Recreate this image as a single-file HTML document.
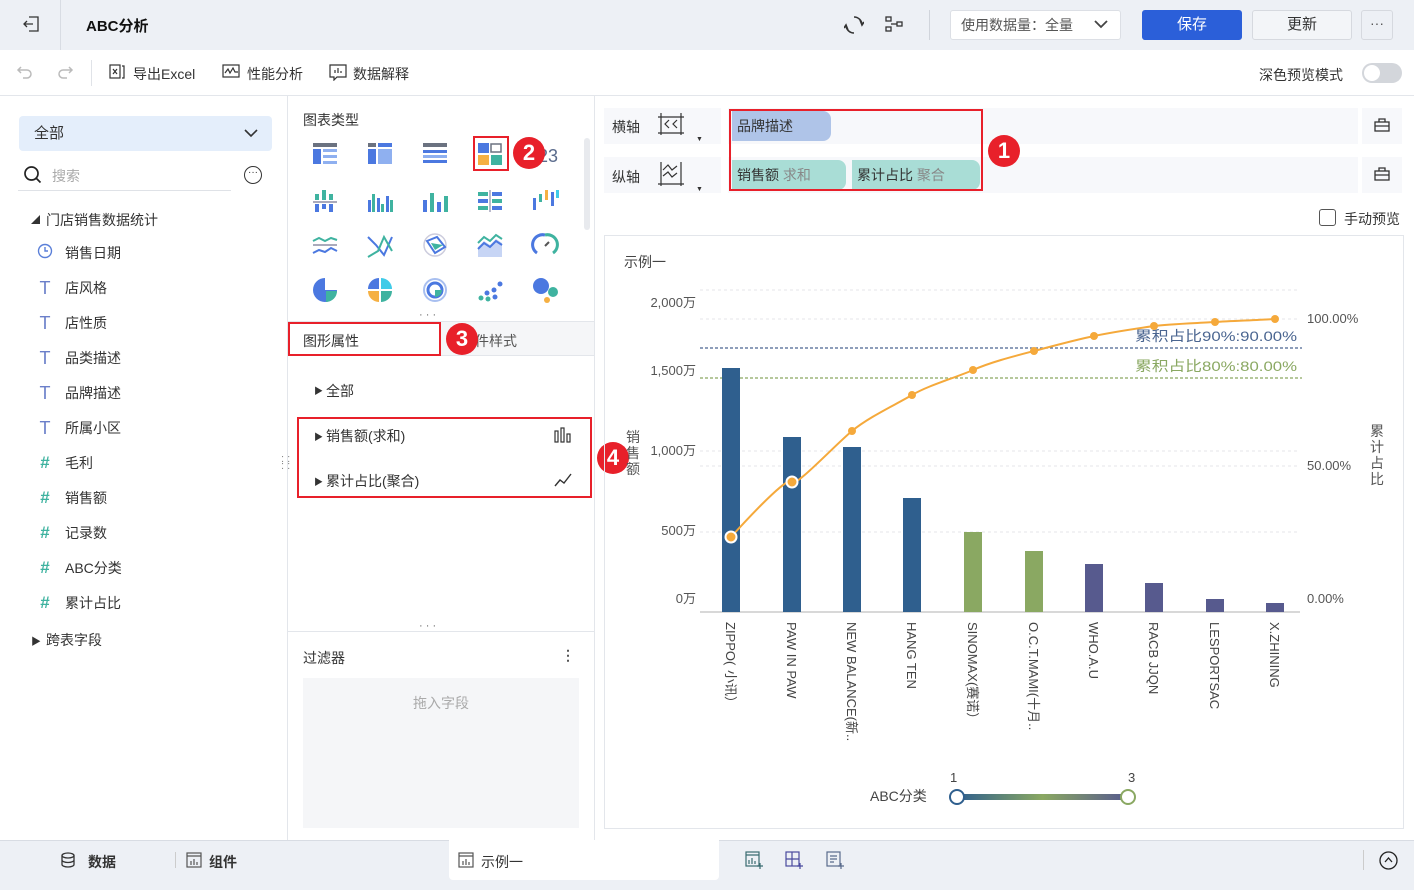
<!DOCTYPE html>
<html><head><meta charset="utf-8"><style>
*{box-sizing:border-box;margin:0;padding:0}
body{width:1414px;height:890px;position:relative;overflow:hidden;background:#fff;font-family:"Liberation Sans","Noto Sans CJK SC",sans-serif;font-size:14px;color:#333}
.a{position:absolute;white-space:nowrap}
.red{position:absolute;border:2px solid #e8202a}
.badge{position:absolute;width:32px;height:32px;border-radius:50%;background:#e8202a;color:#fff;font-size:22px;font-weight:bold;text-align:center;line-height:32px}
.fld{position:absolute;left:36px;font-size:14px;color:#333}
.fld i{position:absolute;left:0;font-style:normal;width:18px;text-align:center}
.fld span{position:absolute;left:29px;white-space:nowrap}
</style></head><body>
<div class="a" style="left:0;top:0;width:1414px;height:50px;background:#edf0f5"></div>
<div class="a" style="left:60px;top:0;width:1px;height:50px;background:#d8dce3"></div>
<svg class="a" style="left:22px;top:15px" width="18" height="18" viewBox="0 0 18 18" fill="none" stroke="#333" stroke-width="1.3"><path d="M7 2h9v14H7M2 9h9M5 6L2 9l3 3"/></svg>
<div class="a" style="left:86px;top:15px;font-weight:bold;font-size:15px;color:#111">ABC分析</div>
<svg class="a" style="left:844px;top:15px" width="20" height="20" viewBox="0 0 20 20" fill="none" stroke="#333" stroke-width="1.6"><path d="M10 2a8 8 0 0 1 8 8M10 18a8 8 0 0 1-8-8M16 5l2 5 2-3M4 15l-2-5-2 3"/></svg>
<svg class="a" style="left:884px;top:16px" width="20" height="18" viewBox="0 0 20 18" fill="none" stroke="#333" stroke-width="1.3"><rect x="2" y="1" width="5" height="4"/><rect x="2" y="11" width="5" height="4"/><rect x="13" y="6" width="5" height="4"/><path d="M7 8h6"/></svg>
<div class="a" style="left:929px;top:10px;width:1px;height:30px;background:#d0d4db"></div>
<div class="a" style="left:950px;top:10px;width:171px;height:30px;background:#fff;border:1px solid #dcdfe5;border-radius:3px;padding-left:10px;line-height:28px;color:#555">使用数据量：全量</div>
<svg class="a" style="left:1093px;top:18px" width="16" height="12" viewBox="0 0 16 12" fill="none" stroke="#444" stroke-width="1.8"><path d="M2 3l6 6 6-6"/></svg>
<div class="a" style="left:1142px;top:10px;width:100px;height:30px;background:#2b5fd9;border-radius:3px;color:#fff;text-align:center;line-height:30px;font-size:15px">保存</div>
<div class="a" style="left:1252px;top:10px;width:100px;height:30px;background:#f3f5f8;border:1px solid #d6d9df;border-radius:3px;text-align:center;line-height:28px;font-size:15px;color:#333">更新</div>
<div class="a" style="left:1361px;top:10px;width:32px;height:30px;border:1px solid #d6d9df;border-radius:3px;text-align:center;line-height:24px;color:#555">···</div>
<div class="a" style="left:0;top:95px;width:1414px;height:1px;background:#e3e6eb"></div>
<svg class="a" style="left:16px;top:64px" width="18" height="16" viewBox="0 0 18 16" fill="none" stroke="#bbb" stroke-width="1.5"><path d="M5 3L2 6l3 3M2 6h9a4 4 0 0 1 0 8H7"/></svg>
<svg class="a" style="left:56px;top:64px" width="18" height="16" viewBox="0 0 18 16" fill="none" stroke="#bbb" stroke-width="1.5"><path d="M13 3l3 3-3 3M16 6H7a4 4 0 0 0 0 8h4"/></svg>
<div class="a" style="left:91px;top:60px;width:1px;height:26px;background:#e0e3e8"></div>
<svg class="a" style="left:109px;top:64px" width="16" height="16" viewBox="0 0 16 16" fill="none" stroke="#333" stroke-width="1.2"><rect x="1" y="1" width="10" height="13"/><path d="M4 5l4 5M8 5l-4 5M13 2h2v12h-2"/></svg>
<div class="a" style="left:133px;top:64px;color:#333">导出Excel</div>
<svg class="a" style="left:222px;top:64px" width="18" height="16" viewBox="0 0 18 16" fill="none" stroke="#333" stroke-width="1.2"><rect x="1" y="1" width="16" height="12"/><path d="M3 9l3-4 2 4 3-5 2 4h3"/></svg>
<div class="a" style="left:247px;top:64px">性能分析</div>
<svg class="a" style="left:329px;top:64px" width="18" height="17" viewBox="0 0 18 17" fill="none" stroke="#333" stroke-width="1.2"><path d="M1 1h16v12H8l-3 3v-3H1z"/><path d="M6 9V6M9 9V4M12 9V7"/></svg>
<div class="a" style="left:353px;top:64px">数据解释</div>
<div class="a" style="left:1259px;top:65px;color:#333">深色预览模式</div>
<div class="a" style="left:1362px;top:63px;width:40px;height:20px;border-radius:10px;background:#d3d6db"></div>
<div class="a" style="left:1364px;top:65px;width:16px;height:16px;border-radius:50%;background:#fff"></div>
<div class="a" style="left:287px;top:96px;width:1px;height:744px;background:#e3e6eb"></div>
<div class="a" style="left:19px;top:116px;width:253px;height:35px;background:#e4eefb;border-radius:4px;padding-left:15px;line-height:35px;font-size:15px">全部</div>
<svg class="a" style="left:243px;top:127px" width="16" height="12" viewBox="0 0 16 12" fill="none" stroke="#333" stroke-width="1.6"><path d="M2 3l6 6 6-6"/></svg>
<svg class="a" style="left:23px;top:165px" width="20" height="20" viewBox="0 0 20 20" fill="none" stroke="#222" stroke-width="1.7"><circle cx="8.5" cy="8.5" r="6.5"/><path d="M13.5 13.5l4 4"/></svg>
<div class="a" style="left:52px;top:166px;color:#aaa">搜索</div>
<div class="a" style="left:18px;top:190px;width:213px;height:1px;background:#dfe2e7"></div>
<div class="a" style="left:244px;top:166px;width:18px;height:18px;border:1.3px solid #333;border-radius:50%;font-size:10px;text-align:center;line-height:12px">···</div>
<div class="a" style="left:31px;top:213px;font-size:9px">◢</div>
<div class="a" style="left:46px;top:210px">门店销售数据统计</div>
<div class="fld" style="top:243px"><i style="color:#5a7fd8"><svg width="16" height="16" viewBox="0 0 16 16" fill="none" stroke="#5a7fd8" stroke-width="1.4"><circle cx="8" cy="8" r="6.5"/><path d="M8 4v4h3"/></svg></i><span>销售日期</span></div>
<div class="fld" style="top:278px"><i style="color:#6b7fc9;font-size:18px">T</i><span>店风格</span></div>
<div class="fld" style="top:313px"><i style="color:#6b7fc9;font-size:18px">T</i><span>店性质</span></div>
<div class="fld" style="top:348px"><i style="color:#6b7fc9;font-size:18px">T</i><span>品类描述</span></div>
<div class="fld" style="top:383px"><i style="color:#6b7fc9;font-size:18px">T</i><span>品牌描述</span></div>
<div class="fld" style="top:418px"><i style="color:#6b7fc9;font-size:18px">T</i><span>所属小区</span></div>
<div class="fld" style="top:453px"><i style="color:#3fb3a0;font-size:17px;font-weight:bold">#</i><span>毛利</span></div>
<div class="fld" style="top:488px"><i style="color:#3fb3a0;font-size:17px;font-weight:bold">#</i><span>销售额</span></div>
<div class="fld" style="top:523px"><i style="color:#3fb3a0;font-size:17px;font-weight:bold">#</i><span>记录数</span></div>
<div class="fld" style="top:558px"><i style="color:#3fb3a0;font-size:17px;font-weight:bold">#</i><span>ABC分类</span></div>
<div class="fld" style="top:593px"><i style="color:#3fb3a0;font-size:17px;font-weight:bold">#</i><span>累计占比</span></div>
<div class="a" style="left:31px;top:633px;font-size:10px">▶</div>
<div class="a" style="left:46px;top:630px">跨表字段</div>
<div class="a" style="left:281px;top:456px;color:#888;font-size:11px;line-height:7px">: :<br>: :</div>
<div class="a" style="left:594px;top:96px;width:1px;height:744px;background:#e3e6eb"></div>
<div class="a" style="left:303px;top:110px">图表类型</div>
<div class="a" style="left:584px;top:138px;width:6px;height:92px;border-radius:3px;background:#e8eaee"></div>
<svg class="a" style="left:305px;top:135px" width="265" height="170">
<g transform="translate(8,8)"><rect width="24" height="4" fill="#6b7280"/><rect y="6" width="8" height="15" fill="#4b78e0"/><rect x="10" y="6" width="14" height="3" fill="#8fb0f0"/><rect x="10" y="12" width="14" height="3" fill="#8fb0f0"/><rect x="10" y="18" width="14" height="3" fill="#8fb0f0"/></g>
<g transform="translate(63,8)"><rect width="8" height="4" fill="#6b7280"/><rect x="10" width="14" height="4" fill="#4b78e0"/><rect y="6" width="8" height="15" fill="#4b78e0"/><rect x="10" y="6" width="14" height="15" fill="#8fb0f0"/></g>
<g transform="translate(118,8)"><rect width="24" height="4" fill="#6b7280"/><rect y="7" width="24" height="3" fill="#4b78e0"/><rect y="12" width="24" height="3" fill="#8fb0f0"/><rect y="17" width="24" height="3" fill="#4b78e0"/></g>
<g transform="translate(173,8)"><rect width="11" height="10" fill="#4b78e0"/><rect x="13" y="1" width="10" height="8" fill="none" stroke="#6b7280" stroke-width="1.5"/><rect y="12" width="11" height="10" fill="#f5b043"/><rect x="13" y="12" width="11" height="10" fill="#3fb3a0"/></g>
<text x="233" y="27" font-size="18" fill="#5a6b8c" font-family="Liberation Sans">23</text>
<g transform="translate(8,55)"><rect x="2" y="4" width="4" height="6" fill="#3fb3a0"/><rect x="9" y="0" width="4" height="10" fill="#3fb3a0"/><rect x="16" y="4" width="4" height="6" fill="#3fb3a0"/><rect y="11" width="24" height="2" fill="#aab"/><rect x="2" y="14" width="4" height="8" fill="#4b78e0"/><rect x="9" y="14" width="4" height="5" fill="#4b78e0"/><rect x="16" y="14" width="4" height="8" fill="#4b78e0"/></g>
<g transform="translate(63,55)"><rect x="0" y="10" width="3" height="12" fill="#4b78e0"/><rect x="4" y="4" width="3" height="18" fill="#3fb3a0"/><rect x="9" y="8" width="3" height="14" fill="#4b78e0"/><rect x="13" y="14" width="3" height="8" fill="#3fb3a0"/><rect x="18" y="6" width="3" height="16" fill="#4b78e0"/><rect x="22" y="10" width="3" height="12" fill="#3fb3a0"/></g>
<g transform="translate(118,55)"><rect x="0" y="10" width="4" height="12" fill="#4b78e0"/><rect x="7" y="3" width="4" height="19" fill="#3fb3a0"/><rect x="14" y="12" width="4" height="10" fill="#4b78e0"/><rect x="21" y="6" width="4" height="16" fill="#3fb3a0"/></g>
<g transform="translate(173,55)"><rect x="0" y="2" width="10" height="4" fill="#3fb3a0"/><rect x="14" y="2" width="10" height="4" fill="#4b78e0"/><rect x="0" y="9" width="10" height="4" fill="#4b78e0"/><rect x="14" y="9" width="10" height="4" fill="#3fb3a0"/><rect x="0" y="16" width="10" height="4" fill="#3fb3a0"/><rect x="14" y="16" width="10" height="4" fill="#4b78e0"/><rect x="11" y="0" width="2" height="22" fill="#bbc"/></g>
<g transform="translate(228,55)"><rect x="0" y="8" width="3" height="12" fill="#4b78e0"/><rect x="6" y="4" width="3" height="8" fill="#3fb3a0"/><rect x="12" y="0" width="3" height="10" fill="#f5b043"/><rect x="18" y="2" width="3" height="14" fill="#4b78e0"/><rect x="23" y="0" width="3" height="8" fill="#3fcbe8"/></g>
<g transform="translate(8,100)" fill="none" stroke-width="2"><path d="M0 6l6-3 6 3 6-3 6 2" stroke="#3fb3a0"/><path d="M0 10h24" stroke="#aab"/><path d="M0 18l6-3 6 2 6-4 6 3" stroke="#4b78e0"/></g>
<g transform="translate(63,100)" fill="none" stroke-width="2"><path d="M0 2l8 8 8 10 8-18" stroke="#4b78e0"/><path d="M0 22l10-6 6-14 8 14" stroke="#3fb3a0"/></g>
<g transform="translate(118,98)" fill="none"><circle cx="12" cy="12" r="11" stroke="#ccd" stroke-width="1.5"/><path d="M4 8l10-4 8 10-10 6z" stroke="#4b78e0" stroke-width="2"/><path d="M8 10l12 2-8 5z" fill="#3fb3a0"/></g>
<g transform="translate(173,100)" fill="none"><path d="M0 12l6-6 6 4 6-6 6 4v14H0z" fill="#c7d5f5"/><path d="M0 8l6-6 6 4 6-6 6 4" stroke="#3fb3a0" stroke-width="2"/><path d="M0 14l6-6 6 4 6-6 6 4" stroke="#4b78e0" stroke-width="2"/></g>
<g transform="translate(228,98)" fill="none" stroke-width="3"><path d="M4 20A10 10 0 0 1 12 2" stroke="#4b78e0"/><path d="M12 2a10 10 0 0 1 8 18" stroke="#3fb3a0"/><path d="M12 13l4-4" stroke="#555" stroke-width="2"/></g>
<g transform="translate(8,143)"><path d="M12 12V0a12 12 0 1 0 12 12z" fill="#4b78e0"/><path d="M13 13h11a11 11 0 0 1-11 11z" fill="#3fb3a0"/></g>
<g transform="translate(63,143)"><path d="M11 11H0A11 11 0 0 1 11 0z" fill="#4b78e0"/><path d="M13 11V0a11 11 0 0 1 11 11z" fill="#3fcbe8"/><path d="M11 13v11A11 11 0 0 1 0 13z" fill="#f5b043"/><path d="M13 13h11a11 11 0 0 1-11 11z" fill="#3fb3a0"/></g>
<g transform="translate(118,143)" fill="none"><circle cx="12" cy="12" r="11" stroke="#a8bff0" stroke-width="2"/><circle cx="12" cy="12" r="7" stroke="#4b78e0" stroke-width="3"/><path d="M12 12h7a7 7 0 0 1-7 7z" fill="#3fb3a0"/></g>
<g transform="translate(173,143)"><circle cx="3" cy="20" r="2.5" fill="#3fb3a0"/><circle cx="9" cy="15" r="2.5" fill="#4b78e0"/><circle cx="10" cy="21" r="2.5" fill="#3fb3a0"/><circle cx="16" cy="12" r="2.5" fill="#4b78e0"/><circle cx="17" cy="19" r="2.5" fill="#4b78e0"/><circle cx="22" cy="6" r="2.5" fill="#4b78e0"/></g>
<g transform="translate(228,143)"><circle cx="8" cy="8" r="8" fill="#4b78e0"/><circle cx="20" cy="14" r="5" fill="#3fb3a0"/><circle cx="14" cy="22" r="3" fill="#f5b043"/></g>
</svg>
<div class="red" style="left:473px;top:136px;width:36px;height:35px"></div>
<div class="badge" style="left:513px;top:137px">2</div>
<div class="a" style="left:419px;top:309px;color:#666;font-size:11px">· · ·</div>
<div class="a" style="left:288px;top:321px;width:306px;height:1px;background:#e3e6eb"></div>
<div class="a" style="left:288px;top:355px;width:306px;height:1px;background:#e3e6eb"></div>
<div class="a" style="left:440px;top:322px;width:154px;height:33px;background:#f5f6f8"></div>
<div class="a" style="left:303px;top:331px">图形属性</div>
<div class="a" style="left:475px;top:331px;color:#555">件样式</div>
<div class="red" style="left:288px;top:322px;width:153px;height:34px"></div>
<div class="badge" style="left:446px;top:323px">3</div>
<div class="a" style="left:314px;top:384px;font-size:9px">▶</div>
<div class="a" style="left:326px;top:381px">全部</div>
<div class="a" style="left:314px;top:430px;font-size:9px">▶</div>
<div class="a" style="left:326px;top:426px">销售额(求和)</div>
<svg class="a" style="left:554px;top:427px" width="18" height="16" viewBox="0 0 18 16" fill="none" stroke="#333" stroke-width="1.2"><rect x="1" y="4" width="3" height="11"/><rect x="7" y="1" width="3" height="14"/><rect x="13" y="7" width="3" height="8"/></svg>
<div class="a" style="left:314px;top:475px;font-size:9px">▶</div>
<div class="a" style="left:326px;top:471px">累计占比(聚合)</div>
<svg class="a" style="left:554px;top:472px" width="18" height="16" viewBox="0 0 18 16" fill="none" stroke="#333" stroke-width="1.4"><path d="M1 14l5-6 4 3 7-9"/></svg>
<div class="red" style="left:297px;top:417px;width:295px;height:81px"></div>
<div class="badge" style="left:597px;top:442px">4</div>
<div class="a" style="left:419px;top:620px;color:#666;font-size:11px">· · ·</div>
<div class="a" style="left:288px;top:631px;width:306px;height:1px;background:#e3e6eb"></div>
<div class="a" style="left:303px;top:648px">过滤器</div>
<div class="a" style="left:561px;top:647px;color:#555;font-weight:bold">⋮</div>
<div class="a" style="left:303px;top:678px;width:276px;height:150px;background:#f5f6f8;text-align:center;padding-top:15px;color:#aaa">拖入字段</div>
<div class="a" style="left:604px;top:108px;width:117px;height:36px;background:#f7f8fb"></div>
<div class="a" style="left:604px;top:157px;width:117px;height:36px;background:#f7f8fb"></div>
<div class="a" style="left:612px;top:117px">横轴</div>
<div class="a" style="left:612px;top:167px">纵轴</div>
<svg class="a" style="left:657px;top:111px" width="28" height="28" viewBox="0 0 28 28" fill="none" stroke="#333" stroke-width="1.2"><path d="M4 2v22M24 2v22M1 22h26M1 6h26M12 9l-4 4 4 4M20 9l-4 4 4 4"/></svg>
<svg class="a" style="left:657px;top:160px" width="28" height="28" viewBox="0 0 28 28" fill="none" stroke="#333" stroke-width="1.2"><path d="M4 2v24M24 2v24M1 24h26M6 10l5-5 4 5 5-4M6 16l5-4 4 5 5-4"/></svg>
<div class="a" style="left:696px;top:136px;font-size:7px">▼</div>
<div class="a" style="left:696px;top:186px;font-size:7px">▼</div>
<div class="a" style="left:728px;top:108px;width:630px;height:36px;background:#f7f8fb"></div>
<div class="a" style="left:728px;top:157px;width:630px;height:36px;background:#f7f8fb"></div>
<div class="a" style="left:1362px;top:108px;width:40px;height:36px;background:#f7f8fb"></div>
<div class="a" style="left:1362px;top:157px;width:40px;height:36px;background:#f7f8fb"></div>
<svg class="a" style="left:1374px;top:117px" width="16" height="16" viewBox="0 0 16 16" fill="none" stroke="#333" stroke-width="1.3"><rect x="1" y="5" width="14" height="9"/><path d="M5 5V2h6v3M1 9h14"/></svg>
<svg class="a" style="left:1374px;top:166px" width="16" height="16" viewBox="0 0 16 16" fill="none" stroke="#333" stroke-width="1.3"><rect x="1" y="5" width="14" height="9"/><path d="M5 5V2h6v3M1 9h14"/></svg>
<div class="a" style="left:732px;top:111px;width:99px;height:30px;background:#afc4e8;border-radius:0 8px 8px 0;padding-left:5px;line-height:30px">品牌描述</div>
<div class="a" style="left:732px;top:160px;width:114px;height:30px;background:#a9ddd6;border-radius:0 8px 8px 0;padding-left:5px;line-height:30px">销售额 <span style="color:#888">求和</span></div>
<div class="a" style="left:852px;top:160px;width:128px;height:30px;background:#a9ddd6;border-radius:0 8px 8px 0;padding-left:5px;line-height:30px">累计占比 <span style="color:#888">聚合</span></div>
<div class="red" style="left:729px;top:109px;width:254px;height:82px"></div>
<div class="badge" style="left:988px;top:135px">1</div>
<div class="a" style="left:1319px;top:209px;width:17px;height:17px;border:1.3px solid #555;border-radius:3px"></div>
<div class="a" style="left:1344px;top:209px">手动预览</div>
<div class="a" style="left:604px;top:235px;width:800px;height:594px;border:1px solid #e3e6eb"></div>
<div class="a" style="left:624px;top:252px;color:#444">示例一</div>
<svg class="a" style="left:600px;top:230px" width="810" height="600" font-family="Liberation Sans,Noto Sans CJK SC,sans-serif">
<g transform="translate(-600,-230)">
<g stroke="#e4e6ea" stroke-dasharray="3 3"><path d="M700 290H1300M700 319H1300M700 451H1300M700 466H1300M700 532H1300"/></g>
<path d="M700 612H1300" stroke="#ccc" stroke-width="1.5"/>
<path d="M700 348H1302" stroke="#4a6590" stroke-dasharray="3 2" stroke-width="1.3"/>
<path d="M700 378H1302" stroke="#8aa862" stroke-dasharray="3 2" stroke-width="1.3"/>
<g fill="#555" font-size="13" text-anchor="end"><text x="696" y="307">2,000万</text><text x="696" y="375">1,500万</text><text x="696" y="455">1,000万</text><text x="696" y="535">500万</text><text x="696" y="603">0万</text></g>
<g fill="#555" font-size="13"><text x="1307" y="323">100.00%</text><text x="1307" y="470">50.00%</text><text x="1307" y="603">0.00%</text></g>
<g fill="#555" font-size="14"><text x="626" y="442">销</text><text x="626" y="458">售</text><text x="626" y="474">额</text><text x="1370" y="436">累</text><text x="1370" y="452">计</text><text x="1370" y="468">占</text><text x="1370" y="484">比</text></g>
<text x="1135" y="341" font-size="14" fill="#4a6590" textLength="162" lengthAdjust="spacingAndGlyphs">累积占比90%:90.00%</text>
<text x="1135" y="371" font-size="14" fill="#8aa862" textLength="162" lengthAdjust="spacingAndGlyphs">累积占比80%:80.00%</text>
<g fill="#2f5f8e"><rect x="722" y="368" width="18" height="244"/><rect x="783" y="437" width="18" height="175"/><rect x="843" y="447" width="18" height="165"/><rect x="903" y="498" width="18" height="114"/></g>
<g fill="#8aa862"><rect x="964" y="532" width="18" height="80"/><rect x="1025" y="551" width="18" height="61"/></g>
<g fill="#575a8e"><rect x="1085" y="564" width="18" height="48"/><rect x="1145" y="583" width="18" height="29"/><rect x="1206" y="599" width="18" height="13"/><rect x="1266" y="603" width="18" height="9"/></g>
<path d="M731 537C760 505 790 475 792 482S835 445 852 431S895 405 912 395S955 378 973 370S1015 356 1034 351S1075 340 1094 336S1140 328 1154 326S1200 323 1215 322S1260 320 1275 319" fill="none" stroke="#f5a93b" stroke-width="2"/>
<g fill="#f5a93b"><circle cx="852" cy="431" r="4"/><circle cx="912" cy="395" r="4"/><circle cx="973" cy="370" r="4"/><circle cx="1034" cy="351" r="4"/><circle cx="1094" cy="336" r="4"/><circle cx="1154" cy="326" r="4"/><circle cx="1215" cy="322" r="4"/><circle cx="1275" cy="319" r="4"/></g>
<g fill="#f5a93b" stroke="#fff" stroke-width="2"><circle cx="731" cy="537" r="5.5"/><circle cx="792" cy="482" r="5.5"/></g>
<g fill="#444" font-size="13">
<text transform="translate(726,622) rotate(90)">ZIPPO(</text><text transform="translate(726,670) rotate(90)">小讯）</text>
<text transform="translate(787,622) rotate(90)">PAW IN PAW</text>
<text transform="translate(847,622) rotate(90)">NEW BALANCE(新..</text>
<text transform="translate(907,622) rotate(90)">HANG TEN</text>
<text transform="translate(968,622) rotate(90)">SINOMAX(赛诺）</text>
<text transform="translate(1029,622) rotate(90)">O.C.T.MAMI(十月..</text>
<text transform="translate(1089,622) rotate(90)">WHO.A.U</text>
<text transform="translate(1149,622) rotate(90)">RACB JJQN</text>
<text transform="translate(1210,622) rotate(90)">LESPORTSAC</text>
<text transform="translate(1270,622) rotate(90)">X.ZHINING</text>
</g>
<defs><linearGradient id="g" x1="0" x2="1"><stop offset="0" stop-color="#2f5f8e"/><stop offset="0.5" stop-color="#8aa862"/><stop offset="1" stop-color="#575a8e"/></linearGradient></defs>
<rect x="957" y="794" width="171" height="6" fill="url(#g)"/>
<circle cx="957" cy="797" r="7" fill="#fff" stroke="#2f5f8e" stroke-width="2"/>
<circle cx="1128" cy="797" r="7" fill="#fff" stroke="#8aa862" stroke-width="2"/>
<text x="950" y="782" font-size="13" fill="#444">1</text><text x="1128" y="782" font-size="13" fill="#444">3</text>
<text x="870" y="801" font-size="14" fill="#444">ABC分类</text>
</g></svg>
<div class="a" style="left:0;top:840px;width:1414px;height:50px;background:#edf0f5;border-top:1px solid #d8dce3"></div>
<div class="a" style="left:449px;top:840px;width:270px;height:40px;background:#fff;border-radius:0 0 4px 4px"></div>
<svg class="a" style="left:60px;top:852px" width="16" height="16" viewBox="0 0 16 16" fill="none" stroke="#333" stroke-width="1.3"><ellipse cx="8" cy="3.5" rx="6" ry="2.5"/><path d="M2 3.5v9c0 1.4 2.7 2.5 6 2.5s6-1.1 6-2.5v-9M2 8c0 1.4 2.7 2.5 6 2.5S14 9.4 14 8"/></svg>
<div class="a" style="left:88px;top:852px;font-weight:bold">数据</div>
<div class="a" style="left:175px;top:852px;width:1px;height:16px;background:#ccc"></div>
<svg class="a" style="left:186px;top:852px" width="16" height="16" viewBox="0 0 16 16" fill="none" stroke="#555" stroke-width="1.2"><rect x="1" y="1" width="14" height="14"/><path d="M1 4h14M5 13V9M8 13V7M11 13v-3"/></svg>
<div class="a" style="left:209px;top:852px;font-weight:bold">组件</div>
<svg class="a" style="left:458px;top:852px" width="16" height="16" viewBox="0 0 16 16" fill="none" stroke="#555" stroke-width="1.2"><rect x="1" y="1" width="14" height="14"/><path d="M1 4h14M5 13V9M8 13V7M11 13v-3"/></svg>
<div class="a" style="left:481px;top:852px">示例一</div>
<svg class="a" style="left:745px;top:851px" width="20" height="18" viewBox="0 0 20 18" fill="none" stroke="#3a6b70" stroke-width="1.2"><rect x="1" y="1" width="13" height="14"/><path d="M1 4h13M4 13V9M7 13V7M10 13v-3M15 12v6M12 15h6"/></svg>
<svg class="a" style="left:785px;top:851px" width="20" height="18" viewBox="0 0 20 18" fill="none" stroke="#4a4a9e" stroke-width="1.2"><rect x="1" y="1" width="13" height="14"/><path d="M7 1v14M1 8h13M15 12v6M12 15h6"/></svg>
<svg class="a" style="left:826px;top:851px" width="20" height="18" viewBox="0 0 20 18" fill="none" stroke="#5a6b8c" stroke-width="1.2"><rect x="1" y="1" width="13" height="14"/><path d="M4 5h7M4 8h7M4 11h4M15 12v6M12 15h6"/></svg>
<div class="a" style="left:1363px;top:850px;width:1px;height:20px;background:#ccc"></div>
<svg class="a" style="left:1379px;top:851px" width="19" height="19" viewBox="0 0 19 19" fill="none" stroke="#222" stroke-width="1.3"><circle cx="9.5" cy="9.5" r="8.5"/><path d="M6 11l3.5-4 3.5 4"/></svg>
</body></html>
